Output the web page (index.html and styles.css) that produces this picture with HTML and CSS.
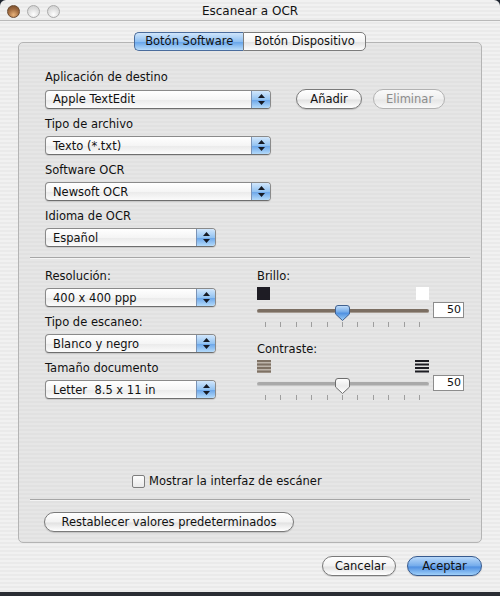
FILE: index.html
```html
<!DOCTYPE html>
<html lang="es">
<head>
  <meta charset="UTF-8">
  <meta name="viewport" content="width=device-width, initial-scale=1.0">
  <title>Escanear a OCR</title>
  <link rel="stylesheet" href="styles.css">
</head>
<body>
  <div class="window">
    <!-- barra de título -->
    <div class="titlebar">
      <div class="lights">
        <span class="light close"></span>
        <span class="light"></span>
        <span class="light"></span>
      </div>
      <div class="title">Escanear a OCR</div>
      <div></div>
    </div>

    <div class="content">
      <div class="tabs">
        <span class="tab selected">Botón Software</span>
        <span class="tab">Botón Dispositivo</span>
      </div>

      <div class="panel">
        <div class="section top">
          <div class="field">
            <div class="label">Aplicación de destino</div>
            <div class="row">
              <div class="popup wide"><span>Apple TextEdit</span><i class="arrows"></i></div>
              <button class="btn add">Añadir</button>
              <button class="btn remove" disabled>Eliminar</button>
            </div>
          </div>
          <div class="field">
            <div class="label">Tipo de archivo</div>
            <div class="popup wide"><span>Texto (*.txt)</span><i class="arrows"></i></div>
          </div>
          <div class="field">
            <div class="label">Software OCR</div>
            <div class="popup wide"><span>Newsoft OCR</span><i class="arrows"></i></div>
          </div>
          <div class="field">
            <div class="label">Idioma de OCR</div>
            <div class="popup"><span>Español</span><i class="arrows"></i></div>
          </div>
        </div>

        <hr class="sep">

        <div class="section cols">
          <div class="col-left">
            <div class="field">
              <div class="label">Resolución:</div>
              <div class="popup"><span>400 x 400 ppp</span><i class="arrows"></i></div>
            </div>
            <div class="field">
              <div class="label">Tipo de escaneo:</div>
              <div class="popup"><span>Blanco y negro</span><i class="arrows"></i></div>
            </div>
            <div class="field">
              <div class="label">Tamaño documento</div>
              <div class="popup"><span>Letter&nbsp; 8.5 x 11 in</span><i class="arrows"></i></div>
            </div>
          </div>

          <div class="col-right">
            <div class="slider-group">
              <div class="label">Brillo:</div>
              <div class="icons">
                <span class="sq dark"></span>
                <span class="sq light-sq"></span>
              </div>
              <div class="slider-row">
                <div class="track-box">
                  <div class="track"></div>
                  <svg class="thumb" width="15" height="16" viewBox="0 0 15 16">
                    <defs>
                      <linearGradient id="blueThumb" x1="0" y1="0" x2="0" y2="1">
                        <stop offset="0" stop-color="#c6e0fb"/>
                        <stop offset="0.45" stop-color="#6fa8e8"/>
                        <stop offset="0.5" stop-color="#4d8fe0"/>
                        <stop offset="1" stop-color="#9fd0f8"/>
                      </linearGradient>
                    </defs>
                    <path d="M3 0.5 H12 Q14.5 0.5 14.5 3 V9 L7.5 15.5 L0.5 9 V3 Q0.5 0.5 3 0.5Z" fill="url(#blueThumb)" stroke="#41618f" stroke-width="1"/>
                  </svg>
                </div>
                <div class="value">50</div>
              </div>
              <div class="ticks">
                <i></i><i></i><i></i><i></i><i></i><i></i><i></i><i></i><i></i><i></i><i></i>
              </div>
            </div>

            <div class="slider-group second">
              <div class="label">Contraste:</div>
              <div class="icons">
                <svg width="14" height="13" viewBox="0 0 14 13">
                  <rect x="0" y="0" width="14" height="13" fill="#bdb4aa"/>
                  <rect x="0" y="0" width="14" height="2" fill="#7e7164"/>
                  <rect x="0" y="3.5" width="14" height="2" fill="#7e7164"/>
                  <rect x="0" y="7" width="14" height="2" fill="#7e7164"/>
                  <rect x="0" y="10.5" width="14" height="2" fill="#7e7164"/>
                </svg>
                <svg width="14" height="13" viewBox="0 0 14 13">
                  <rect x="0" y="0" width="14" height="2" fill="#1c1c22"/>
                  <rect x="0" y="3.5" width="14" height="2" fill="#1c1c22"/>
                  <rect x="0" y="7" width="14" height="2" fill="#1c1c22"/>
                  <rect x="0" y="10.5" width="14" height="2" fill="#1c1c22"/>
                </svg>
              </div>
              <div class="slider-row">
                <div class="track-box">
                  <div class="track off"></div>
                  <svg class="thumb" width="15" height="16" viewBox="0 0 15 16">
                    <defs>
                      <linearGradient id="whiteThumb" x1="0" y1="0" x2="0" y2="1">
                        <stop offset="0" stop-color="#ffffff"/>
                        <stop offset="0.5" stop-color="#ececec"/>
                        <stop offset="1" stop-color="#ffffff"/>
                      </linearGradient>
                    </defs>
                    <path d="M3 0.5 H12 Q14.5 0.5 14.5 3 V9 L7.5 15.5 L0.5 9 V3 Q0.5 0.5 3 0.5Z" fill="url(#whiteThumb)" stroke="#6d6d6d" stroke-width="1"/>
                  </svg>
                </div>
                <div class="value">50</div>
              </div>
              <div class="ticks">
                <i></i><i></i><i></i><i></i><i></i><i></i><i></i><i></i><i></i><i></i><i></i>
              </div>
            </div>
          </div>
        </div>

        <div class="check-row">
          <span class="checkbox"></span>
          <span>Mostrar la interfaz de escáner</span>
        </div>

        <hr class="sep low">

        <div class="reset-row">
          <button class="btn reset">Restablecer valores predeterminados</button>
        </div>
      </div>

      <div class="actions">
        <button class="btn">Cancelar</button>
        <button class="btn default">Aceptar</button>
      </div>
    </div>
  </div>
</body>
</html>
```

FILE: styles.css
```css
html,
body {
  margin: 0;
  width: 100%;
  height: 100%;
  background: #1f2530;
}
body {
  font-family: "DejaVu Sans", Verdana, sans-serif;
  font-size: 11px;
  color: #111;
}

.window {
  width: 500px; height: 592px;
  border-radius: 6px 6px 0 0;
  overflow: hidden;
  display: flex;
  flex-direction: column;
  background: repeating-linear-gradient(to bottom, #f1f1f1 0 2px, #eaeaea 2px 4px);
  border-bottom: 4px solid #2a2d33;
}

/* barra de título */
.titlebar {
  height: 20px;
  border-bottom: 1px solid #b9b9b9;
  display: grid;
  grid-template-columns: 1fr auto 1fr;
  align-items: center;
}
.lights {
  display: flex;
  gap: 7px;
  padding-left: 7px;
  padding-top: 3px;
}
.light {
  width: 11px; height: 11px;
  border-radius: 50%;
  border: 1px solid #a9a9a9;
  background: radial-gradient(circle at 50% 75%, #ffffff 0, #e4e4e4 45%, #c9c9c9 100%);
}
.light.close {
  border-color: #6b4a30;
  background: radial-gradient(circle at 50% 80%, #e8b27a 0, #a56f43 50%, #6e4526 100%);
}
.title {
  font-size: 12px;
  padding-top: 2px;
}

.content {
  flex: 1;
  padding: 11px 18px 0 18px;
}

/* pestañas */
.tabs {
  display: flex;
  justify-content: center;
  position: relative;
  z-index: 1;
  margin-bottom: -9px;
}
.tab {
  height: 17px;
  line-height: 17px;
  padding: 0 10px;
  font-size: 11.5px;
  border: 1px solid #7c7c7c;
  background: linear-gradient(#ffffff, #f3f3f3 50%, #e3e3e3 55%, #fdfdfd);
}
.tab:first-child {
  border-radius: 5px 0 0 5px;
  border-right: none;
}
.tab:last-child {
  border-radius: 0 5px 5px 0;
}
.tab.selected {
  border-color: #4a6c9c;
  background: linear-gradient(#cfe5fb, #8fc0f2 50%, #69a6ea 55%, #b9dcfa);
}

.panel {
  height: 499px;
  border: 1px solid #b4b4b4;
  border-radius: 5px;
  background: repeating-linear-gradient(to bottom, #e6e6e6 0 2px, #e1e1e1 2px 4px);
  display: flex;
  flex-direction: column;
}

.section.top {
  padding: 27px 0 0 26px;
}
.field {
  display: flex;
  flex-direction: column;
  gap: 4px;
  margin-bottom: 8px;
}
.label {
  line-height: 15px;
  font-size: 11.5px;
}
.row {
  display: flex;
  gap: 11px;
  align-items: center;
}

/* menús desplegables */
.popup {
  width: 169px; height: 17px;
  border: 1px solid #8a8a8a;
  border-bottom-color: #6e6e6e;
  border-radius: 4px;
  background: linear-gradient(#ffffff, #f5f5f5 50%, #ebebeb 55%, #fbfbfb);
  display: flex;
  align-items: center;
  overflow: hidden;
  box-shadow: 0 1px 1px rgba(0, 0, 0, 0.12);
}
.popup.wide {
  width: 224px;
}
.popup span {
  flex: 1;
  padding-left: 7px;
  font-size: 11.5px;
}
.arrows {
  width: 18px; height: 17px;
  border-left: 1px solid #7b93b5;
  background:
    url("data:image/svg+xml,%3Csvg xmlns='http://www.w3.org/2000/svg' width='7' height='11'%3E%3Cpath d='M3.5 0 L7 4 H0Z M0 7 H7 L3.5 11Z' fill='%23161a24'/%3E%3C/svg%3E") no-repeat center / 7px 11px,
    linear-gradient(#d2e7fc, #93c3f2 50%, #6ea8ea 55%, #b4dafa);
}

/* botones */
.btn {
  font: inherit;
  font-size: 11.5px;
  color: #111;
  height: 20px;
  padding: 0 12px;
  border: 1px solid #7a7a7a;
  border-radius: 10px;
  background: linear-gradient(#ffffff, #f2f2f2 50%, #e2e2e2 55%, #ffffff);
  box-shadow: 0 1px 1px rgba(0, 0, 0, 0.15);
}
.btn.add {
  margin-left: 14px;
  width: 66px;
}
.btn.remove {
  width: 72px;
  color: #8c8c8c;
  border-color: #b2b2b2;
  box-shadow: none;
  background: linear-gradient(#fafafa, #efefef 50%, #e6e6e6 55%, #f8f8f8);
}
.btn.default {
  border-color: #375a8e;
  background: linear-gradient(#b9d9fa, #73abeb 50%, #4f8fe1 55%, #9fd0f9);
}

.sep {
  margin: 2px 11px 0 11px;
  border: none;
  border-top: 1px solid #a6a6a6;
  border-bottom: 1px solid #f4f4f4;
  height: 0;
}

.section.cols {
  display: flex;
  padding: 10px 0 0 26px;
}
.col-left {
  width: 212px;
}
.col-right {
  display: flex;
  flex-direction: column;
}

/* deslizadores */
.icons {
  width: 172px;
  display: flex;
  justify-content: space-between;
  margin-top: 3px;
  height: 13px;
}
.sq {
  width: 13px; height: 13px;
}
.sq.dark {
  background: #1e1c24;
}
.sq.light-sq {
  background: #ffffff;
}
.slider-row {
  display: flex;
  align-items: center;
  margin-top: 2px;
}
.track-box {
  width: 172px; height: 16px;
  position: relative;
}
.track {
  position: absolute;
  left: 0; right: 0; top: 7px;
  height: 3px;
  border-radius: 2px;
  background: #7b6e62;
  border-bottom: 1px solid #a59b91;
}
.track.off {
  background: #a9a9a9;
  border-bottom-color: #c4c4c4;
}
.thumb {
  position: absolute;
  left: 78px; top: 3px;
}
.value {
  width: 27px; height: 14px;
  margin-left: 4px;
  border: 1px solid #8c8c8c;
  background: #fff;
  text-align: right;
  line-height: 14px;
  padding-right: 2px;
  box-sizing: content-box;
  font-size: 11px;
}
.ticks {
  width: 172px;
  display: flex;
  justify-content: space-between;
  padding: 0 9px 0 8px;
  box-sizing: border-box;
  margin-top: 4px;
}
.ticks i {
  width: 1px; height: 5px;
  background: #9e9e9e;
}
.slider-group.second {
  margin-top: 15px;
}

.check-row {
  margin-top: auto;
  display: flex;
  align-items: center;
  gap: 4px;
  padding-left: 113px;
  font-size: 11.5px;
}
.checkbox {
  width: 11px; height: 11px;
  border: 1px solid #7d7d7d;
  border-radius: 2px;
  background: linear-gradient(#fdfdfd, #e9e9e9);
}
.sep.low {
  margin-top: 11px;
}
.reset-row {
  padding: 11px 0 10px 25px;
}
.btn.reset {
  width: 250px;
  height: 20px;
}

.actions {
  display: flex;
  justify-content: flex-end;
  gap: 11px;
  margin-top: 13px;
}
.actions .btn {
  height: 20px;
  width: 74px;
}
.actions .btn.default {
  width: 75px;
}
```
